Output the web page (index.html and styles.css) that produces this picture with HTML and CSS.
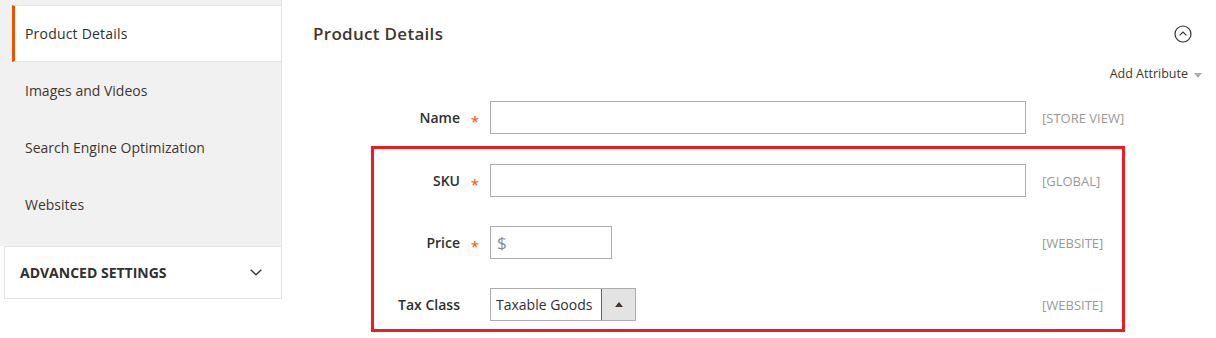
FILE: index.html
```html
<!DOCTYPE html>
<html lang="en">
<head>
<meta charset="utf-8">
<title>Product Details</title>
<link rel="stylesheet" href="styles.css">
</head>
<body>
<div class="page">
  <aside class="sidebar">
    <div class="tab-list">
      <div class="tab-stub"></div>
      <div class="tab active">Product Details</div>
      <div class="tab">Images and Videos</div>
      <div class="tab">Search Engine Optimization</div>
      <div class="tab">Websites</div>
    </div>
    <div class="advanced">
      <span class="advanced-title">ADVANCED SETTINGS</span>
      <svg class="chev" width="12" height="7" viewBox="0 0 12 7"><path d="M0.7 0.8 L6 5.8 L11.3 0.8" fill="none" stroke="#41362f" stroke-width="1.4"/></svg>
    </div>
  </aside>
  <main class="main">
    <div class="title-row">
      <h2 class="title">Product Details</h2>
      <svg class="collapse" width="18" height="18" viewBox="0 0 18 18"><circle cx="9" cy="9" r="8" fill="none" stroke="#303030" stroke-width="1.2"/><path d="M5.6 10.4 L9 7 L12.4 10.4" fill="none" stroke="#303030" stroke-width="1.2"/></svg>
    </div>
    <div class="actions">
      <span class="add-attr">Add Attribute</span>
      <span class="tri-down"></span>
    </div>
    <div class="form">
      <div class="row row-first">
        <label class="label">Name</label>
        <span class="req">*</span>
        <div class="control"><div class="input wide"></div></div>
        <span class="scope">[STORE VIEW]</span>
      </div>
      <div class="row">
        <label class="label">SKU</label>
        <span class="req">*</span>
        <div class="control"><div class="input wide"></div></div>
        <span class="scope">[GLOBAL]</span>
      </div>
      <div class="row">
        <label class="label">Price</label>
        <span class="req">*</span>
        <div class="control"><div class="input price"><span class="prefix">$</span></div></div>
        <span class="scope">[WEBSITE]</span>
      </div>
      <div class="row">
        <label class="label">Tax Class</label>
        <span class="req"></span>
        <div class="control">
          <div class="select">
            <span class="select-value">Taxable Goods</span>
            <span class="select-btn"><span class="tri-up"></span></span>
          </div>
        </div>
        <span class="scope">[WEBSITE]</span>
      </div>
      <div class="highlight"></div>
    </div>
  </main>
</div>
</body>
</html>
```

FILE: styles.css
```css
* { box-sizing: border-box; }
html, body { margin: 0; padding: 0; background: #fff; }
body {
  font-family: "Open Sans", "Liberation Sans", sans-serif;
  color: #41362f;
  width: 1216px;
  height: 338px;
  overflow: hidden;
}
.page { display: flex; align-items: flex-start; }

.sidebar { width: 282px; flex: none; }
.tab-list {
  background: #f1f1f1;
  border-right: 1px solid #e3e3e3;
  padding-bottom: 13px;
}
.tab-stub { height: 5px; }
.tab {
  height: 57px;
  display: flex;
  align-items: center;
  padding-left: 25px;
  font-size: 14px;
  color: #41362f;
}
.tab.active {
  margin-left: 12px;
  padding-left: 10px;
  background: #fff;
  border-left: 3px solid #eb5202;
  border-top: 1px solid #e3e3e3;
  border-bottom: 1px solid #e3e3e3;
  color: #303030;
  letter-spacing: 0.2px;
}
.advanced {
  margin-left: 4px;
  height: 53px;
  border: 1px solid #e3e3e3;
  display: flex;
  align-items: center;
  justify-content: space-between;
  padding: 0 19px 1px 15px;
}
.advanced-title { font-size: 14px; font-weight: 700; color: #303030; }
.chev { display: block; margin-top: 1px; }

.main { flex: 1; padding: 0 14px 0 31px; position: relative; }
.title-row {
  height: 64px;
  display: flex;
  align-items: center;
  justify-content: space-between;
  padding-top: 4px;
}
.title {
  margin: 0;
  font-size: 17px;
  font-weight: 600;
  color: #41362f;
  letter-spacing: 0.3px;
  line-height: 24px;
}
.collapse { display: block; margin-right: 10px; }
.actions {
  height: 18px;
  display: flex;
  align-items: center;
  justify-content: flex-end;
  gap: 6px;
  padding-top: 2px;
}
.add-attr { font-size: 12.5px; color: #41362f; line-height: 16px; }
.tri-down {
  width: 0; height: 0;
  border-left: 4.5px solid transparent;
  border-right: 4.5px solid transparent;
  border-top: 5px solid #adadad;
  margin-top: 2px;
}

.form { padding-top: 19px; position: relative; }
.row { display: flex; align-items: center; height: 33px; margin-bottom: 29px; }
.row.row-first { margin-bottom: 30px; }
.label {
  width: 147px;
  text-align: right;
  font-size: 14px;
  font-weight: 600;
  color: #303030;
}
.req {
  width: 30px;
  text-align: center;
  color: #eb5202;
  font-size: 15px;
  padding-top: 7px;
  line-height: 20px;
}
.control { width: 536px; }
.input {
  height: 33px;
  border: 1px solid #adadad;
  background: #fff;
}
.input.wide { width: 536px; }
.input.price {
  width: 122px;
  display: flex;
  align-items: center;
  padding-left: 6px;
}
.prefix { font-size: 17px; color: #7f8a96; }
.select {
  width: 146px;
  height: 33px;
  border: 1px solid #adadad;
  display: flex;
  background: #fff;
}
.select-value {
  flex: 1;
  font-size: 14px;
  color: #303030;
  padding-left: 5px;
  display: flex;
  align-items: center;
}
.select-btn {
  width: 34px;
  background: #e3e3e3;
  border-left: 1px solid #1979c3;
  display: flex;
  align-items: center;
  justify-content: center;
}
.tri-up {
  width: 0; height: 0;
  border-left: 4.5px solid transparent;
  border-right: 4.5px solid transparent;
  border-bottom: 5px solid #41362f;
}
.scope {
  margin-left: 16px;
  font-size: 13px;
  color: #999;
}

.highlight {
  position: absolute;
  left: 58px;
  top: 64px;
  width: 754px;
  height: 186px;
  border: 3px solid #ec1c24;
  pointer-events: none;
}
```
